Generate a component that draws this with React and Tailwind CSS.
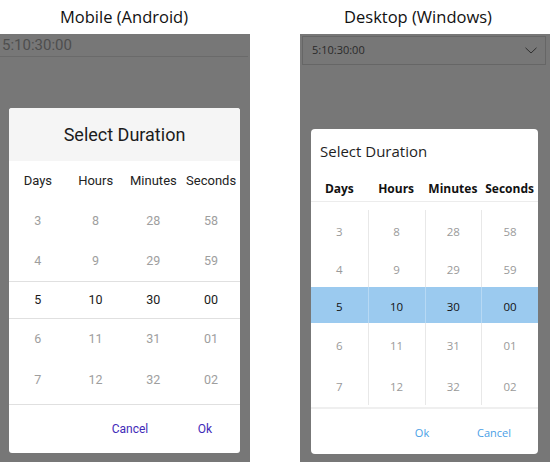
import React from "react";

const columns = [
  { label: "Days", values: ["3", "4", "5", "6", "7"] },
  { label: "Hours", values: ["8", "9", "10", "11", "12"] },
  { label: "Minutes", values: ["28", "29", "30", "31", "32"] },
  { label: "Seconds", values: ["58", "59", "00", "01", "02"] },
];

const rowIdx = [0, 1, 2, 3, 4];
const roboto = { fontFamily: "Roboto, 'Liberation Sans', sans-serif" };
const segoe = { fontFamily: "'Open Sans', 'Noto Sans', sans-serif" };

// Android row heights so the picked row sits between the two lines
const androidRows = ["h-[40px]", "h-[40px]", "h-[38px] border-y border-[#e0e0e0]", "h-[41px]", "h-[40px]"];
const winRows = ["h-[39px]", "h-[38px]", "h-[36px] bg-[#9bcaef]", "h-[41px]", "h-[41px]"];

function MobilePanel() {
  return (
    <div className="w-[250px] flex flex-col" style={roboto}>
      <div className="h-[34px] flex items-center justify-center pr-[2px] text-[16.5px] text-[#111]" style={segoe}>
        Mobile (Android)
      </div>
      <div className="h-[428px] bg-[#777777] flex flex-col">
        <div className="h-[23px] mr-[2px] border-b border-[#6a6a6a] pl-[2px] flex items-center pt-[1px] text-[15px] text-[#4e4e4e]">
          5:10:30:00
        </div>
        <div className="mt-[51px] ml-[9px] w-[231px] bg-white rounded-[3px] overflow-hidden flex flex-col">
          <div className="h-[53px] bg-[#f5f5f5] flex items-center justify-center text-[18px] text-[#1c1c1c]">
            Select Duration
          </div>
          <div className="grid grid-cols-4 h-[40px] items-center text-[13px] text-[#222]">
            {columns.map((c) => (
              <div key={c.label} className="text-center">
                {c.label}
              </div>
            ))}
          </div>
          {rowIdx.map((r) => (
            <div key={r} className={`grid grid-cols-4 items-center text-[12.5px] ${androidRows[r]} ${r === 2 ? "text-[#1a1a1a]" : "text-[#9e9e9e]"}`}>
              {columns.map((c) => (
                <div key={c.label} className="text-center">
                  {c.values[r]}
                </div>
              ))}
            </div>
          ))}
          <div className="h-[4px]" />
          <div className="h-[49px] border-t border-[#e0e0e0] flex justify-end items-center text-[12px] text-[#3f2ab8]">
            <div className="w-[80px] text-center">Cancel</div>
            <div className="w-[70px] text-center">Ok</div>
          </div>
        </div>
      </div>
    </div>
  );
}

function DesktopPanel() {
  return (
    <div className="w-[250px] flex flex-col" style={segoe}>
      <div className="h-[34px] flex items-center justify-center pr-[14px] text-[16.5px] text-[#111]">
        Desktop (Windows)
      </div>
      <div className="h-[428px] bg-[#777777] flex flex-col">
        <div className="mt-[2px] ml-[2px] mr-[4px] h-[29px] border border-[#666666] flex items-center justify-between pl-[9px] pr-[8px] text-[11px] text-[#2a2a2a]">
          <span>5:10:30:00</span>
          <svg width="12" height="7" viewBox="0 0 12 7" fill="none">
            <path d="M0.5 0.8 L6 6 L11.5 0.8" stroke="#2f2f2f" strokeWidth="1" />
          </svg>
        </div>
        <div className="mt-[64px] ml-[11px] w-[227px] bg-white rounded-[4px] overflow-hidden flex flex-col">
          <div className="h-[44px] flex items-center pl-[9px] pt-[1px] text-[15px] text-[#1f1f1f]">
            Select Duration
          </div>
          <div className="grid grid-cols-4 h-[29px] items-center pt-[3px] border-b border-[#ececec] text-[12px] font-bold text-[#111]">
            {columns.map((c) => (
              <div key={c.label} className="text-center">
                {c.label}
              </div>
            ))}
          </div>
          <div className="pt-[8px] pb-[2px]">
            {rowIdx.map((r) => (
              <div key={r} className={`grid grid-cols-4 text-[11.5px] ${winRows[r]} ${r === 2 ? "text-[#111]" : "text-[#9a9a9a]"}`}>
                {columns.map((c, i) => (
                  <div
                    key={c.label}
                    className={`flex items-center justify-center pt-[4px] ${i > 0 ? (r === 2 ? "border-l border-[#b7d9f4]" : "border-l border-[#e8e8e8]") : ""}`}
                  >
                    {c.values[r]}
                  </div>
                ))}
              </div>
            ))}
          </div>
          <div className="h-[47px] border-t-2 border-[#efefef] flex justify-end items-center pt-[4px] pr-[8px] text-[11px] text-[#4aa0e6]">
            <div className="w-[72px] text-center">Ok</div>
            <div className="w-[72px] text-center">Cancel</div>
          </div>
        </div>
      </div>
    </div>
  );
}

export default function App() {
  return (
    <div className="w-[550px] h-[462px] bg-white flex gap-[50px] overflow-hidden">
      <MobilePanel />
      <DesktopPanel />
    </div>
  );
}
